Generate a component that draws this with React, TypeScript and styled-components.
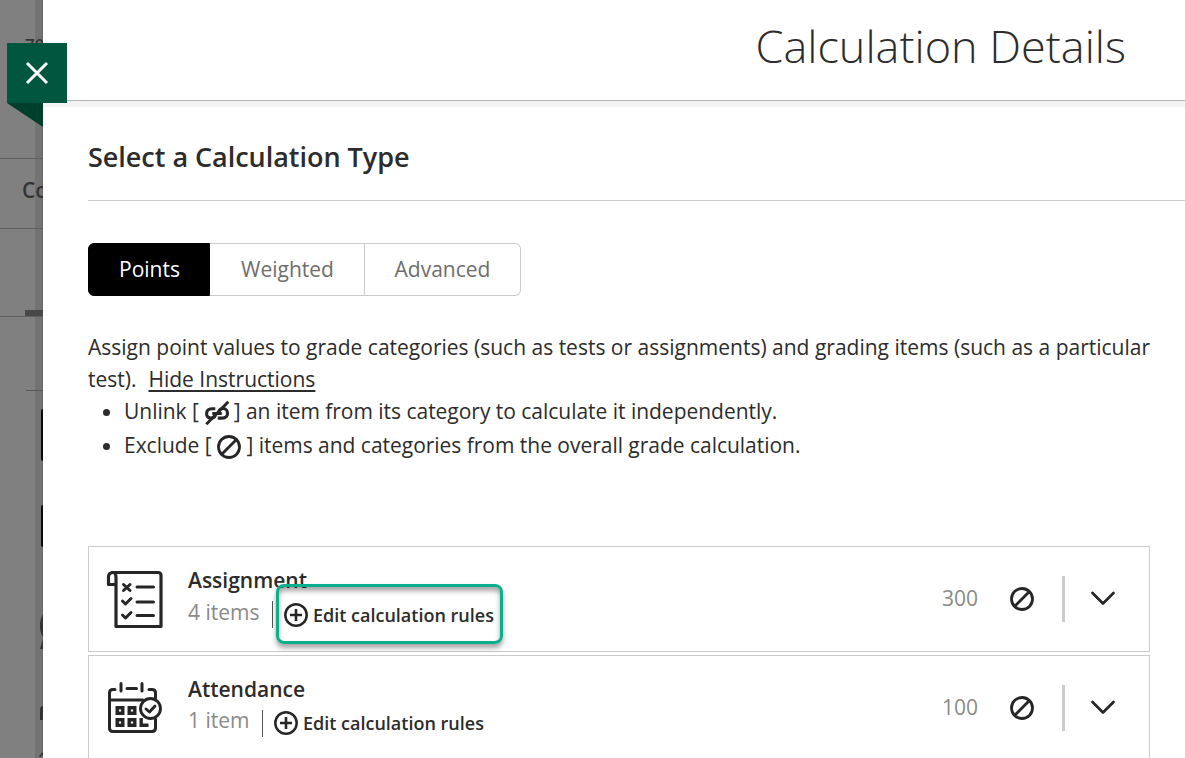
import React from "react";
import styled, { createGlobalStyle } from "styled-components";

const ink = "#262626";

const GlobalStyle = createGlobalStyle`
  * { box-sizing: border-box; }
  html, body { margin: 0; padding: 0; }
  body {
    font-family: "Open Sans", "Noto Sans", sans-serif;
    color: #2c2c2c;
    background: #fff;
    overflow: hidden;
  }
  button { font: inherit; color: inherit; }
`;

const Screen = styled.div`
  position: relative;
  display: flex;
  width: 1185px;
  height: 758px;
  overflow: hidden;
`;

const Backdrop = styled.aside`
  flex: 0 0 43px;
  height: 758px;
  overflow: hidden;
  white-space: nowrap;
  background: linear-gradient(to right, #808080 35px, #737373 35px, #737373 42px, #686868 42px);
`;

const BackText = styled.div<{ $height: number; $left: number; $size: number; $bottom: number }>`
  height: ${p => p.$height}px;
  padding-left: ${p => p.$left}px;
  padding-bottom: ${p => p.$bottom}px;
  font-size: ${p => p.$size}px;
  font-weight: 600;
  line-height: 1;
  color: #333;
  display: flex;
  align-items: flex-end;
  border-bottom: 1px solid #5f5f5f;
`;

const BackBlock = styled.div<{ $gap: number; $left: number; $height: number; $color: string; $radius?: string }>`
  margin-top: ${p => p.$gap}px;
  margin-left: ${p => p.$left}px;
  height: ${p => p.$height}px;
  background: ${p => p.$color};
  border-radius: ${p => p.$radius ?? "0"};
`;

const BackIcons = styled.svg`
  display: block;
  margin: 62px 0 0 39px;
`;

const CloseButton = styled.button`
  position: absolute;
  left: 7px;
  top: 43px;
  width: 60px;
  height: 60px;
  padding: 0;
  border: 0;
  background: #00573d;
  svg { display: block; }
`;

const Fold = styled.svg`
  position: absolute;
  left: 7px;
  top: 103px;
`;

const Panel = styled.main`
  flex: 1;
  min-width: 0;
  background: #fff;
`;

const Header = styled.header`
  height: 107px;
  padding: 16px 59px 0 0;
  text-align: right;
  background: linear-gradient(to bottom, #fff 100px, #b5b5b5 100px, #b5b5b5 101px, #f4f4f4 101px);
`;

const Title = styled.h1`
  margin: 0;
  font-size: 45px;
  line-height: 60px;
  font-weight: 300;
`;

const Content = styled.div`
  padding-left: 45px;
`;

const SectionTitle = styled.h2`
  margin: 0;
  height: 94px;
  padding-top: 32px;
  font-size: 27px;
  line-height: 36px;
  font-weight: 600;
  letter-spacing: -0.03px;
  border-bottom: 1px solid #cbcbcb;
`;

const Segments = styled.div`
  display: flex;
  width: 433px;
  height: 53px;
  margin-top: 42px;
`;

const Segment = styled.button<{ $width: number; $active?: boolean }>`
  width: ${p => p.$width}px;
  padding: 0 0 2px;
  border: 1px solid ${p => (p.$active ? "#000" : "#cbcbcb")};
  border-left-width: ${p => (p.$active ? "1px" : "0")};
  background: ${p => (p.$active ? "#000" : "#fff")};
  color: ${p => (p.$active ? "#fff" : "#6e6e6e")};
  font-size: 21px;
  &:first-child { border-radius: 6px 0 0 6px; }
  &:last-child { border-radius: 0 6px 6px 0; }
  &:not(:last-child) { padding-left: 1px; }
`;

const Intro = styled.div`
  margin-top: 35px;
  font-size: 21px;
  line-height: 32px;
  font-weight: 400;
  white-space: nowrap;
`;

const HideLink = styled.span`
  margin-left: 6.5px;
  text-decoration: underline;
  text-decoration-thickness: 2px;
  text-underline-offset: 3px;
`;

const Tips = styled.ul`
  margin: 0;
  padding: 0 0 0 36px;
`;

const Tip = styled.li`
  height: 34px;
  line-height: 32px;
  letter-spacing: -0.025px;
  svg { display: inline-block; vertical-align: -6px; }
`;

const Categories = styled.div`
  display: flex;
  flex-direction: column;
  gap: 3px;
  width: 1062px;
  margin-top: 83px;
`;

const Card = styled.section`
  display: flex;
  height: 106px;
  border: 1px solid #cbcbcb;
  padding-left: 15px;
`;

const Glyph = styled.div`
  width: 84px;
  padding-top: 20px;
  svg { display: block; }
`;

const Info = styled.div`
  flex: 1;
  padding-top: 17px;
`;

const Name = styled.div`
  font-size: 21px;
  line-height: 32px;
  font-weight: 600;
`;

const Meta = styled.div`
  display: flex;
  height: 32px;
`;

const Count = styled.span<{ $width: number; $line: number }>`
  width: ${p => p.$width}px;
  font-size: 21px;
  line-height: ${p => p.$line}px;
  color: #8a8a8a;
`;

const Divider = styled.span`
  width: 1px;
  height: 27px;
  margin-top: 5px;
  background: #555;
`;

const Rules = styled.button<{ $highlight?: boolean }>`
  position: relative;
  display: flex;
  align-items: center;
  gap: 5px;
  height: 26px;
  margin: ${p => (p.$highlight ? "6px 0 0 11px" : "5px 0 0 11px")};
  padding: 0;
  border: 0;
  background: none;
  font-size: 18px;
  font-weight: 600;
  white-space: nowrap;
`;

const Highlight = styled.span`
  position: absolute;
  left: -8px;
  top: -18px;
  width: 227px;
  height: 60px;
  border: 3px solid #0cae8e;
  border-radius: 8px;
  box-shadow: 0 4px 5px rgba(0, 0, 0, 0.35), inset 0 4px 5px rgba(0, 0, 0, 0.35);
`;

const Points = styled.div`
  width: 68px;
  font-size: 21px;
  line-height: 102px;
  color: #8a8a8a;
`;

const Actions = styled.div`
  display: flex;
  align-items: center;
  width: 139px;
  svg { display: block; }
`;

const Rule = styled.span`
  width: 3px;
  height: 46px;
  margin: 0 25px 0 28px;
  background: #cbcbcb;
`;

const ExcludeIcon = () => (
  <svg width="24" height="24" viewBox="0 0 24 24" fill="none" stroke={ink} strokeWidth="2.8">
    <circle cx="12" cy="12" r="10.5" />
    <path d="M4.8 19.2 19.2 4.8" />
  </svg>
);

const UnlinkIcon = () => (
  <svg width="24" height="25" viewBox="0 0 24 25" fill="none" stroke={ink} strokeWidth="3.100" overflow="visible">
    <g transform="translate(0.800 0.800)">
      <path d="M10.500 8H7C3.500 8 1.800 10 1.800 12.800S3.500 17.300 6.300 17.300C9 17.300 10.800 15.500 10.800 12.700H7.500" />
      <path d="M13 17.300H17.500C21 17.300 22.700 15 22.700 12.500S21 7.700 18.500 7.700C15.500 7.700 13.800 9.800 13.800 12.700H17" />
      <path d="M1.500 23.500 23.500 1" strokeWidth="2.900" />
    </g>
  </svg>
);

const PlusIcon = () => (
  <svg width="24" height="24" viewBox="0 0 24 24" fill="none" stroke={ink}>
    <circle cx="12" cy="12" r="10.700" strokeWidth="2.500" />
    <path d="M12 6v12M6 12h12" strokeWidth="2.600" />
  </svg>
);

const ChevronIcon = () => (
  <svg width="26" height="16" viewBox="0 0 26 16" fill="none" stroke={ink} strokeWidth="2.700" strokeLinecap="round" strokeLinejoin="round">
    <path d="M2.500 2 13 12.500 23.500 2" />
  </svg>
);

const AssignmentIcon = () => (
  <svg width="60" height="64" viewBox="0 0 60 64" fill="none" stroke={ink} strokeWidth="3.200" strokeLinejoin="round">
    <path d="M7 5.500H54Q57 5.500 57 8.500V59.500H12V11Q12 5.500 9 5.500 4.500 5.500 4.500 10V17.500H12" />
    <path d="M33 20H49.500M33 35H49.500M33 48.500H49.500" strokeLinecap="round" strokeWidth="3" />
    <path d="M19.500 17.500 26 23.500M26 17.500 19.500 23.500M18.500 34 21.500 37 27 31.500M18.500 48 21.500 51 27 45.500" strokeLinecap="round" strokeWidth="3" />
  </svg>
);

const AttendanceIcon = () => (
  <svg width="60" height="64" viewBox="0 0 60 64" fill="none" stroke={ink} strokeWidth="3" strokeLinecap="round" strokeLinejoin="round">
    <path d="M11 13.500H9Q5.500 13.500 5.500 17V52Q5.500 55.500 9 55.500H48Q51.500 55.500 51.500 52V43M45 13.500H48Q51.500 13.500 51.500 17V22M5.500 24H39" />
    <path d="M17 7.500V15M38 7.500V15M23 12.500H32.500" />
    <g strokeWidth="3.400" strokeLinecap="butt" strokeLinejoin="miter">
      <path d="M13.200 31.700H18.800V37.300H13.200ZM25.200 31.700H30.800V37.300H25.200ZM13.200 43.700H18.800V49.300H13.200ZM25.200 43.700H30.800V49.300H25.200ZM37.200 42V49.300H44.500" />
    </g>
    <circle cx="46.500" cy="32.500" r="10" fill="#fff" strokeWidth="2.900" />
    <path d="M42 33 45.500 36 51 30" strokeWidth="2.900" />
  </svg>
);

type CategoryProps = {
  name: string;
  count: string;
  countWidth: number;
  points: string;
  icon: React.ReactNode;
  highlight?: boolean;
};

const Category = ({ name, count, countWidth, points, icon, highlight }: CategoryProps) => (
  <Card>
    <Glyph>{icon}</Glyph>
    <Info>
      <Name>{name}</Name>
      <Meta>
        <Count $width={countWidth} $line={highlight ? 32 : 31}>{count}</Count>
        <Divider />
        <Rules $highlight={highlight}>
          <PlusIcon />
          Edit calculation rules
          {highlight && <Highlight />}
        </Rules>
      </Meta>
    </Info>
    <Points>{points}</Points>
    <Actions>
      <ExcludeIcon />
      <Rule />
      <ChevronIcon />
    </Actions>
  </Card>
);

export default function App() {
  return (
    <Screen>
      <GlobalStyle />
      <Backdrop>
        <BackText $height={159} $left={25} $size={17} $bottom={105}>70</BackText>
        <BackText $height={70} $left={22} $size={21} $bottom={27}>Co</BackText>
        <BackBlock $gap={81} $left={25} $height={6} $color="#484848" />
        <BackBlock $gap={0} $left={0} $height={1} $color="#5f5f5f" />
        <BackBlock $gap={73} $left={26} $height={1} $color="#5a5a5a" />
        <BackBlock $gap={18} $left={41} $height={52} $color="#0a0a0a" $radius="3px 0 0 3px" />
        <BackBlock $gap={44} $left={41} $height={42} $color="#0a0a0a" $radius="3px 0 0 3px" />
        <BackIcons width="4" height="149" viewBox="0 0 4 149" fill="#333">
          <path d="M4 5Q1 10 1 17T4 28ZM4 30 1 40H4ZM4 97Q1 97 1 101V111H4ZM0 147 4 143V145.500L1 148Z" />
        </BackIcons>
      </Backdrop>
      <Panel>
        <Header>
          <Title>Calculation Details</Title>
        </Header>
        <Content>
          <SectionTitle>Select a Calculation Type</SectionTitle>
          <Segments>
            <Segment $width={122} $active>Points</Segment>
            <Segment $width={155}>Weighted</Segment>
            <Segment $width={156}>Advanced</Segment>
          </Segments>
          <Intro>
            Assign point values to grade categories (such as tests or assignments) and grading items (such as a particular
            <br />
            test). <HideLink>Hide Instructions</HideLink>
            <Tips>
              <Tip>Unlink [ <UnlinkIcon /> ] an item from its category to calculate it independently.</Tip>
              <Tip>Exclude [ <ExcludeIcon /> ] items and categories from the overall grade calculation.</Tip>
            </Tips>
          </Intro>
          <Categories>
            <Category name="Assignment" count="4 items" countWidth={84} points="300" icon={<AssignmentIcon />} highlight />
            <Category name="Attendance" count="1 item" countWidth={74} points="100" icon={<AttendanceIcon />} />
          </Categories>
        </Content>
      </Panel>
      <Fold width="36" height="24" viewBox="0 0 36 24">
        <path d="M0 0H36V24Z" fill="#003f2b" />
      </Fold>
      <CloseButton aria-label="Close">
        <svg width="60" height="60" viewBox="0 0 60 60" fill="none" stroke="#fff" strokeWidth="3">
          <path d="M20 20 40 40M40 20 20 40" />
        </svg>
      </CloseButton>
    </Screen>
  );
}
